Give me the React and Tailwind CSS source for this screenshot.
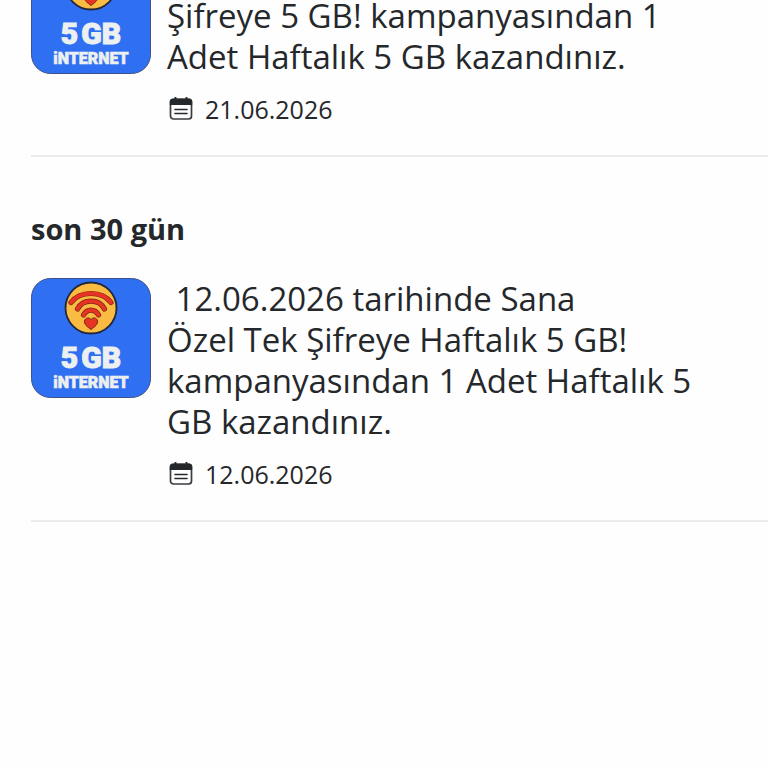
const GIFTS = [
  {
    id: "recent",
    lines: [
      "\u00a021.06.2026 tarihinde Tek",
      "Şifreye 5 GB! kampanyasından 1",
      "Adet Haftalık 5 GB kazandınız.",
    ],
    date: "21.06.2026",
  },
  {
    id: "month",
    heading: "son 30 gün",
    lines: [
      "\u00a012.06.2026 tarihinde Sana",
      "Özel Tek Şifreye Haftalık 5 GB!",
      "kampanyasından 1 Adet Haftalık 5",
      "GB kazandınız.",
    ],
    date: "12.06.2026",
  },
];

const ARCS = [
  "M40 24.5 C49 12.500 71 12.500 80 24.500",
  "M46.500 31 C52 20.500 68 20.500 73.500 31",
  "M52.500 37 C56 30.500 64 30.500 67.500 37",
];

function GiftBadge() {
  return (
    <svg
      viewBox="0 0 120 120"
      className="h-[120px] w-[120px] shrink-0"
      role="img"
      aria-label="5 GB internet"
    >
      <rect x="0.5" y="0.5" width="119" height="119" rx="19" fill="#2f6ff2" stroke="#3c5288" />
      <circle cx="60" cy="30" r="25.5" fill="#fabb42" stroke="#22273a" strokeWidth="1.8" />
      <g fill="none" strokeLinecap="round">
        {ARCS.map((d) => (
          <g key={d}>
            <path d={d} stroke="#7a2417" strokeWidth="5.2" />
            <path d={d} stroke="#e63323" strokeWidth="3.8" />
          </g>
        ))}
      </g>
      <path
        d="M60 51.5 C56 48.5 53 46.5 53.5 43 C54 39.5 58.5 39 60 41.5 C61.5 39 66 39.5 66.5 43 C67 46.5 64 48.5 60 51.5 Z"
        fill="#e63323"
        stroke="#7a2417"
        strokeWidth="1"
      />
      <g
        fill="#edf0f0"
        stroke="#edf0f0"
        textAnchor="middle"
        className="font-['Roboto',sans-serif] font-black"
      >
        <text x="60" y="90" strokeWidth="1" className="text-[30px]">5{"\u200a"}GB</text>
        <text x="60" y="110" strokeWidth="0.6" className="text-[16px]">iNTERNET</text>
      </g>
    </svg>
  );
}

function CalendarIcon() {
  return (
    <svg viewBox="0 0 24 24" className="h-6 w-6 shrink-0" aria-hidden="true">
      <rect x="1.5" y="2" width="21" height="20" rx="3" fill="none" stroke="#3a3d40" strokeWidth="1.7" />
      <path d="M0.8 8V4.5a2.5 2.5 0 0 1 2.5-2.5h17.4A2.5 2.5 0 0 1 23.2 4.5V8z" fill="#25282b" />
      <path d="M6.5 0.8v3M17.5 0.8v3" stroke="#25282b" strokeWidth="2" strokeLinecap="round" />
      <path d="M6 12.5h12M6 16.5h12" stroke="#25282b" strokeWidth="1.6" strokeLinecap="round" />
    </svg>
  );
}

function GiftItem({ lines, date }) {
  return (
    <article className="flex gap-4 border-b-2 border-[#ececee] pb-[30px]">
      <GiftBadge />
      <div className="min-w-0 flex-1">
        <p className="text-[33px] leading-[41px]">
          {lines.map((line) => (
            <span key={line} className="block">
              {line}
            </span>
          ))}
        </p>
        <div className="mt-4 flex items-center gap-3 pl-0.5">
          <CalendarIcon />
          <time className="text-[25px] leading-8">{date}</time>
        </div>
      </div>
    </article>
  );
}

export default function App() {
  return (
    <div className="min-h-screen overflow-hidden bg-[#fefefe] font-['Open_Sans','Noto_Sans',sans-serif] font-medium text-[#25282b]">
      <main className="-mt-[46px] pl-[31px]">
        {GIFTS.map((gift) => (
          <section key={gift.id}>
            {gift.heading && (
              <h2 className="pt-14 pb-[33px] text-[29px] leading-8 font-bold">{gift.heading}</h2>
            )}
            <GiftItem lines={gift.lines} date={gift.date} />
          </section>
        ))}
      </main>
    </div>
  );
}
